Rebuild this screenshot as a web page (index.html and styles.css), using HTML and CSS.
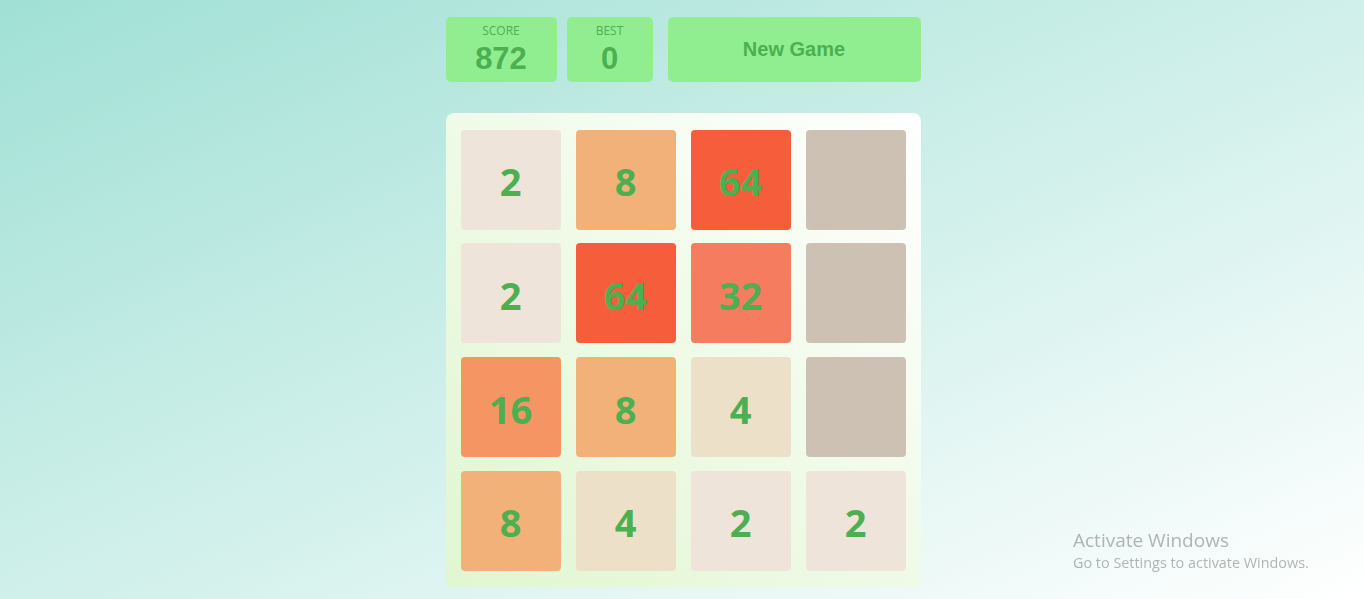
FILE: index.html
```html
<!DOCTYPE html>
<html lang="en">
<head>
<meta charset="utf-8">
<title>2048</title>
<link rel="stylesheet" href="styles.css">
</head>
<body>
<main class="game">
  <header class="top">
    <div class="stat stat-score">
      <div class="stat-label">SCORE</div>
      <div class="stat-value">872</div>
    </div>
    <div class="stat stat-best">
      <div class="stat-label">BEST</div>
      <div class="stat-value">0</div>
    </div>
    <button class="new-game">New Game</button>
  </header>
  <section class="board">
    <div class="tile t2">2</div>
    <div class="tile t8">8</div>
    <div class="tile t64">64</div>
    <div class="tile empty"></div>
    <div class="tile t2">2</div>
    <div class="tile t64">64</div>
    <div class="tile t32">32</div>
    <div class="tile empty"></div>
    <div class="tile t16">16</div>
    <div class="tile t8">8</div>
    <div class="tile t4">4</div>
    <div class="tile empty"></div>
    <div class="tile t8">8</div>
    <div class="tile t4">4</div>
    <div class="tile t2">2</div>
    <div class="tile t2">2</div>
  </section>
</main>
<div class="activate">
  <div class="activate-title">Activate Windows</div>
  <div class="activate-sub">Go to Settings to activate Windows.</div>
</div>
</body>
</html>
```

FILE: styles.css
```css
html, body {
  margin: 0;
  height: 100%;
}
body {
  background: linear-gradient(to bottom right, #a0e0d5 0%, #ffffff 100%);
  font-family: "Open Sans", "Noto Sans", sans-serif;
  overflow: hidden;
}
.game {
  width: 475px;
  margin: 0 auto;
  padding-top: 17px;
  transform: translateX(1px);
}
.top {
  display: flex;
  height: 65px;
}
.stat {
  background: #90ee90;
  border-radius: 5px;
  display: flex;
  flex-direction: column;
  align-items: center;
  color: #4caf50;
}
.stat-score { width: 111px; margin-right: 10px; }
.stat-best { width: 86px; margin-right: 15px; }
.stat-label {
  font-size: 12px;
  line-height: 14px;
  margin-top: 7px;
}
.stat-value {
  font-family: "Liberation Sans", Arial, sans-serif;
  font-weight: bold;
  font-size: 31px;
  line-height: 34px;
  margin-top: 4px;
}
.new-game {
  flex: 1;
  border: none;
  border-radius: 5px;
  background: #90ee90;
  color: #4caf50;
  font-family: "Liberation Sans", Arial, sans-serif;
  font-weight: bold;
  font-size: 20px;
  padding: 0;
  padding-bottom: 1px;
}
.board {
  margin-top: 31px;
  background: linear-gradient(to top right, #e0f6d0 0%, #ffffff 100%);
  border-radius: 8px;
  padding: 16.7px 15px;
  display: grid;
  grid-template-columns: repeat(4, 100px);
  grid-auto-rows: 100px;
  column-gap: 15px;
  row-gap: 13.67px;
}
.tile {
  border-radius: 4px;
  display: flex;
  align-items: center;
  justify-content: center;
  color: #4caf50;
  font-weight: bold;
  font-size: 38px;
  line-height: 1;
  padding-top: 3px;
  box-sizing: border-box;
}
.empty { background: #cdc1b4; }
.t2 { background: #eee4da; }
.t4 { background: #ede0c8; }
.t8 { background: #f2b179; }
.t16 { background: #f59563; }
.t32 { background: #f67c5f; }
.t64 { background: #f65e3b; }
.activate {
  position: fixed;
  left: 1073px;
  top: 527px;
  color: rgba(120, 120, 120, 0.55);
}
.activate-title {
  font-size: 19px;
  line-height: 26px;
}
.activate-sub {
  font-size: 14.4px;
  line-height: 20px;
}
```
